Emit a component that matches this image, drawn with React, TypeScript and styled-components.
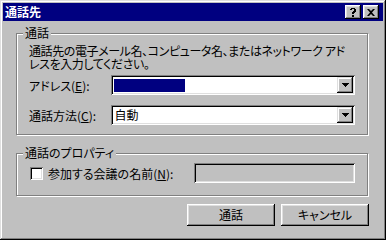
import React from "react";
import styled, { createGlobalStyle } from "styled-components";

const Global = createGlobalStyle`
  html, body { margin: 0; padding: 0; background: #c0c0c0; }
  body {
    font-family: "Noto Sans CJK JP", "Noto Sans", sans-serif;
    font-size: 12px;
    font-feature-settings: "palt";
    color: #000;
  }
  * { box-sizing: border-box; }
`;

const Window = styled.div`
  width: 386px;
  height: 240px;
  background: #c0c0c0;
  padding: 3px;
  box-shadow: inset -1px -1px #000, inset 1px 1px #dfdfdf, inset -2px -2px #808080, inset 2px 2px #fff;
  display: flex;
  flex-direction: column;
`;

const TitleBar = styled.div`
  height: 18px;
  background: #000080;
  display: flex;
  align-items: center;
  padding: 0 4px 0 2px;
  gap: 2px;
`;

const Title = styled.div`
  flex: 1;
  color: #fff;
  font-weight: bold;
  font-size: 12px;
  line-height: 14px;
`;

const CapButton = styled.div`
  width: 16px;
  height: 14px;
  background: #c0c0c0;
  box-shadow: inset -1px -1px #000, inset 1px 1px #fff, inset -2px -2px #808080, inset 2px 2px #dfdfdf;
  display: flex;
  align-items: center;
  justify-content: center;
`;

const Body = styled.div`
  padding: 12px 15px 0 13px;
  display: flex;
  flex-direction: column;
`;

const Group = styled.div<{ $h: number; $mt: number }>`
  position: relative;
  height: ${(p) => p.$h}px;
  margin-top: ${(p) => p.$mt}px;
  border: 1px solid #808080;
  box-shadow: inset 1px 1px #fff, 1px 1px #fff;
  padding: 7px 12px 0 12px;
`;

const Legend = styled.div`
  position: absolute;
  left: 6px;
  top: -8px;
  padding: 0 2px;
  background: #c0c0c0;
  line-height: 14px;
`;

const Para = styled.div`
  line-height: 13px;
  white-space: nowrap;
  letter-spacing: -0.4px;
  margin: 3px 0 5px;
`;

const ParaLine = styled.div`
  height: 13px;
`;

const Row = styled.div<{ $mt?: number }>`
  display: flex;
  align-items: center;
  height: 20px;
  margin-top: ${(p) => p.$mt ?? 0}px;
`;

const Label = styled.div`
  width: 83px;
  white-space: nowrap;
`;

const Combo = styled.div`
  width: 245px;
  height: 20px;
  background: #fff;
  box-shadow: inset 1px 1px #808080, inset -1px -1px #fff, inset 2px 2px #000, inset -2px -2px #dfdfdf;
  padding: 2px;
  display: flex;
  align-items: stretch;
`;

const ComboText = styled.div`
  flex: 1;
  padding: 1px 1px;
  display: flex;
  align-items: center;
  line-height: 14px;
`;

const Highlight = styled.div`
  width: 71px;
  height: 13px;
  background: #000080;
`;

const DropButton = styled.div`
  width: 16px;
  background: #c0c0c0;
  box-shadow: inset -1px -1px #000, inset 1px 1px #dfdfdf, inset -2px -2px #808080, inset 2px 2px #fff;
  display: flex;
  align-items: center;
  justify-content: center;
`;

const Check = styled.div`
  width: 13px;
  height: 13px;
  background: #fff;
  box-shadow: inset 1px 1px #808080, inset -1px -1px #fff, inset 2px 2px #000, inset -2px -2px #dfdfdf;
  margin-left: 1px;
  margin-right: 5px;
`;

const CheckLabel = styled.div`
  width: 146px;
  white-space: nowrap;
`;

const TextBox = styled.div`
  width: 162px;
  height: 20px;
  background: #c0c0c0;
  box-shadow: inset 1px 1px #808080, inset -1px -1px #fff, inset 2px 2px #000, inset -2px -2px #dfdfdf;
`;

const Buttons = styled.div`
  display: flex;
  justify-content: flex-end;
  gap: 6px;
  margin-top: 8px;
  margin-right: -1px;
`;

const Button = styled.div`
  width: 88px;
  height: 22px;
  background: #c0c0c0;
  box-shadow: inset -1px -1px #000, inset 1px 1px #fff, inset -2px -2px #808080, inset 2px 2px #dfdfdf;
  display: flex;
  align-items: center;
  justify-content: center;
  line-height: 14px;
`;

const Arrow = () => (
  <svg width="7" height="4" viewBox="0 0 7 4">
    <path d="M0 0h7v1H0zM1 1h5v1H1zM2 2h3v1H2zM3 3h1v1H3z" fill="#000" />
  </svg>
);

const HelpGlyph = () => (
  <svg width="8" height="9" viewBox="0 0 8 9">
    <path d="M1 1h1V0h4v1h1v3H6v1H5v1H3V4h1V3h1V1H3v1H1zM3 7h2v2H3z" fill="#000" />
  </svg>
);

const CloseGlyph = () => (
  <svg width="8" height="7" viewBox="0 0 8 7">
    <path d="M0 0h2l2 2 2-2h2L5 3.5 8 7H6L4 5 2 7H0l3-3.5z" fill="#000" />
  </svg>
);

export default function App() {
  return (
    <>
      <Global />
      <Window>
        <TitleBar>
          <Title>通話先</Title>
          <CapButton><HelpGlyph /></CapButton>
          <CapButton><CloseGlyph /></CapButton>
        </TitleBar>
        <Body>
          <Group $h={102} $mt={0}>
            <Legend>通話</Legend>
            <Para>
              <ParaLine>通話先の電子メール名、コンピュータ名、またはネットワーク アド</ParaLine>
              <ParaLine>レスを入力してください。</ParaLine>
            </Para>
            <Row>
              <Label>アドレス(<u>E</u>):</Label>
              <Combo>
                <ComboText><Highlight /></ComboText>
                <DropButton><Arrow /></DropButton>
              </Combo>
            </Row>
            <Row $mt={10}>
              <Label>通話方法(<u>C</u>):</Label>
              <Combo>
                <ComboText>自動</ComboText>
                <DropButton><Arrow /></DropButton>
              </Combo>
            </Row>
          </Group>
          <Group $h={43} $mt={18}>
            <Legend>通話のプロパティ</Legend>
            <Row $mt={2}>
              <Check />
              <CheckLabel>参加する会議の名前(<u>N</u>):</CheckLabel>
              <TextBox />
            </Row>
          </Group>
          <Buttons>
            <Button>通話</Button>
            <Button>キャンセル</Button>
          </Buttons>
        </Body>
      </Window>
    </>
  );
}
